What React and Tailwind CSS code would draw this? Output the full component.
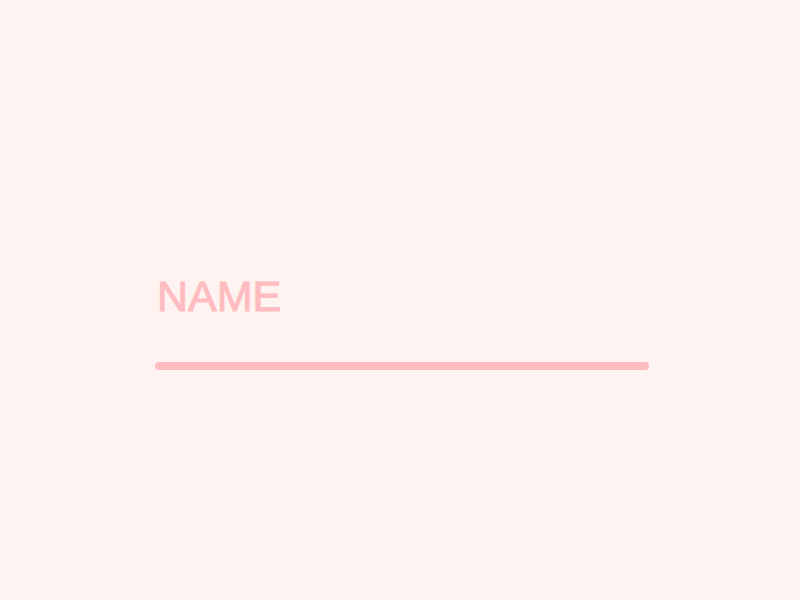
import React, { useState } from 'react';

const NameField = () => {
    const [name, setName] = useState('');

    return (
        <div className="w-full max-w-[494px] font-['Liberation_Sans',Arial,sans-serif] text-[#ffbcc0]">
            <label htmlFor="name" className="block px-0.5 text-[43px] leading-[64px] [-webkit-text-stroke:1px_#ffbcc0]">NAME</label>
            <input
                id="name"
                type="text"
                value={name}
                onChange={(e) => setName(e.target.value)}
                autoComplete="off"
                className="block w-full h-[34px] px-0.5 bg-transparent outline-none text-2xl"
            />
            {/* Underline */}
            <div className="h-2 rounded-full bg-[#ffbcc0]"></div>
        </div>
    );
};

const App = () => {
    return (
        <main className="min-h-screen flex items-center justify-center bg-[#fff3f1] pl-1 pt-[34px]">
            <NameField />
        </main>
    );
};

export default App;
